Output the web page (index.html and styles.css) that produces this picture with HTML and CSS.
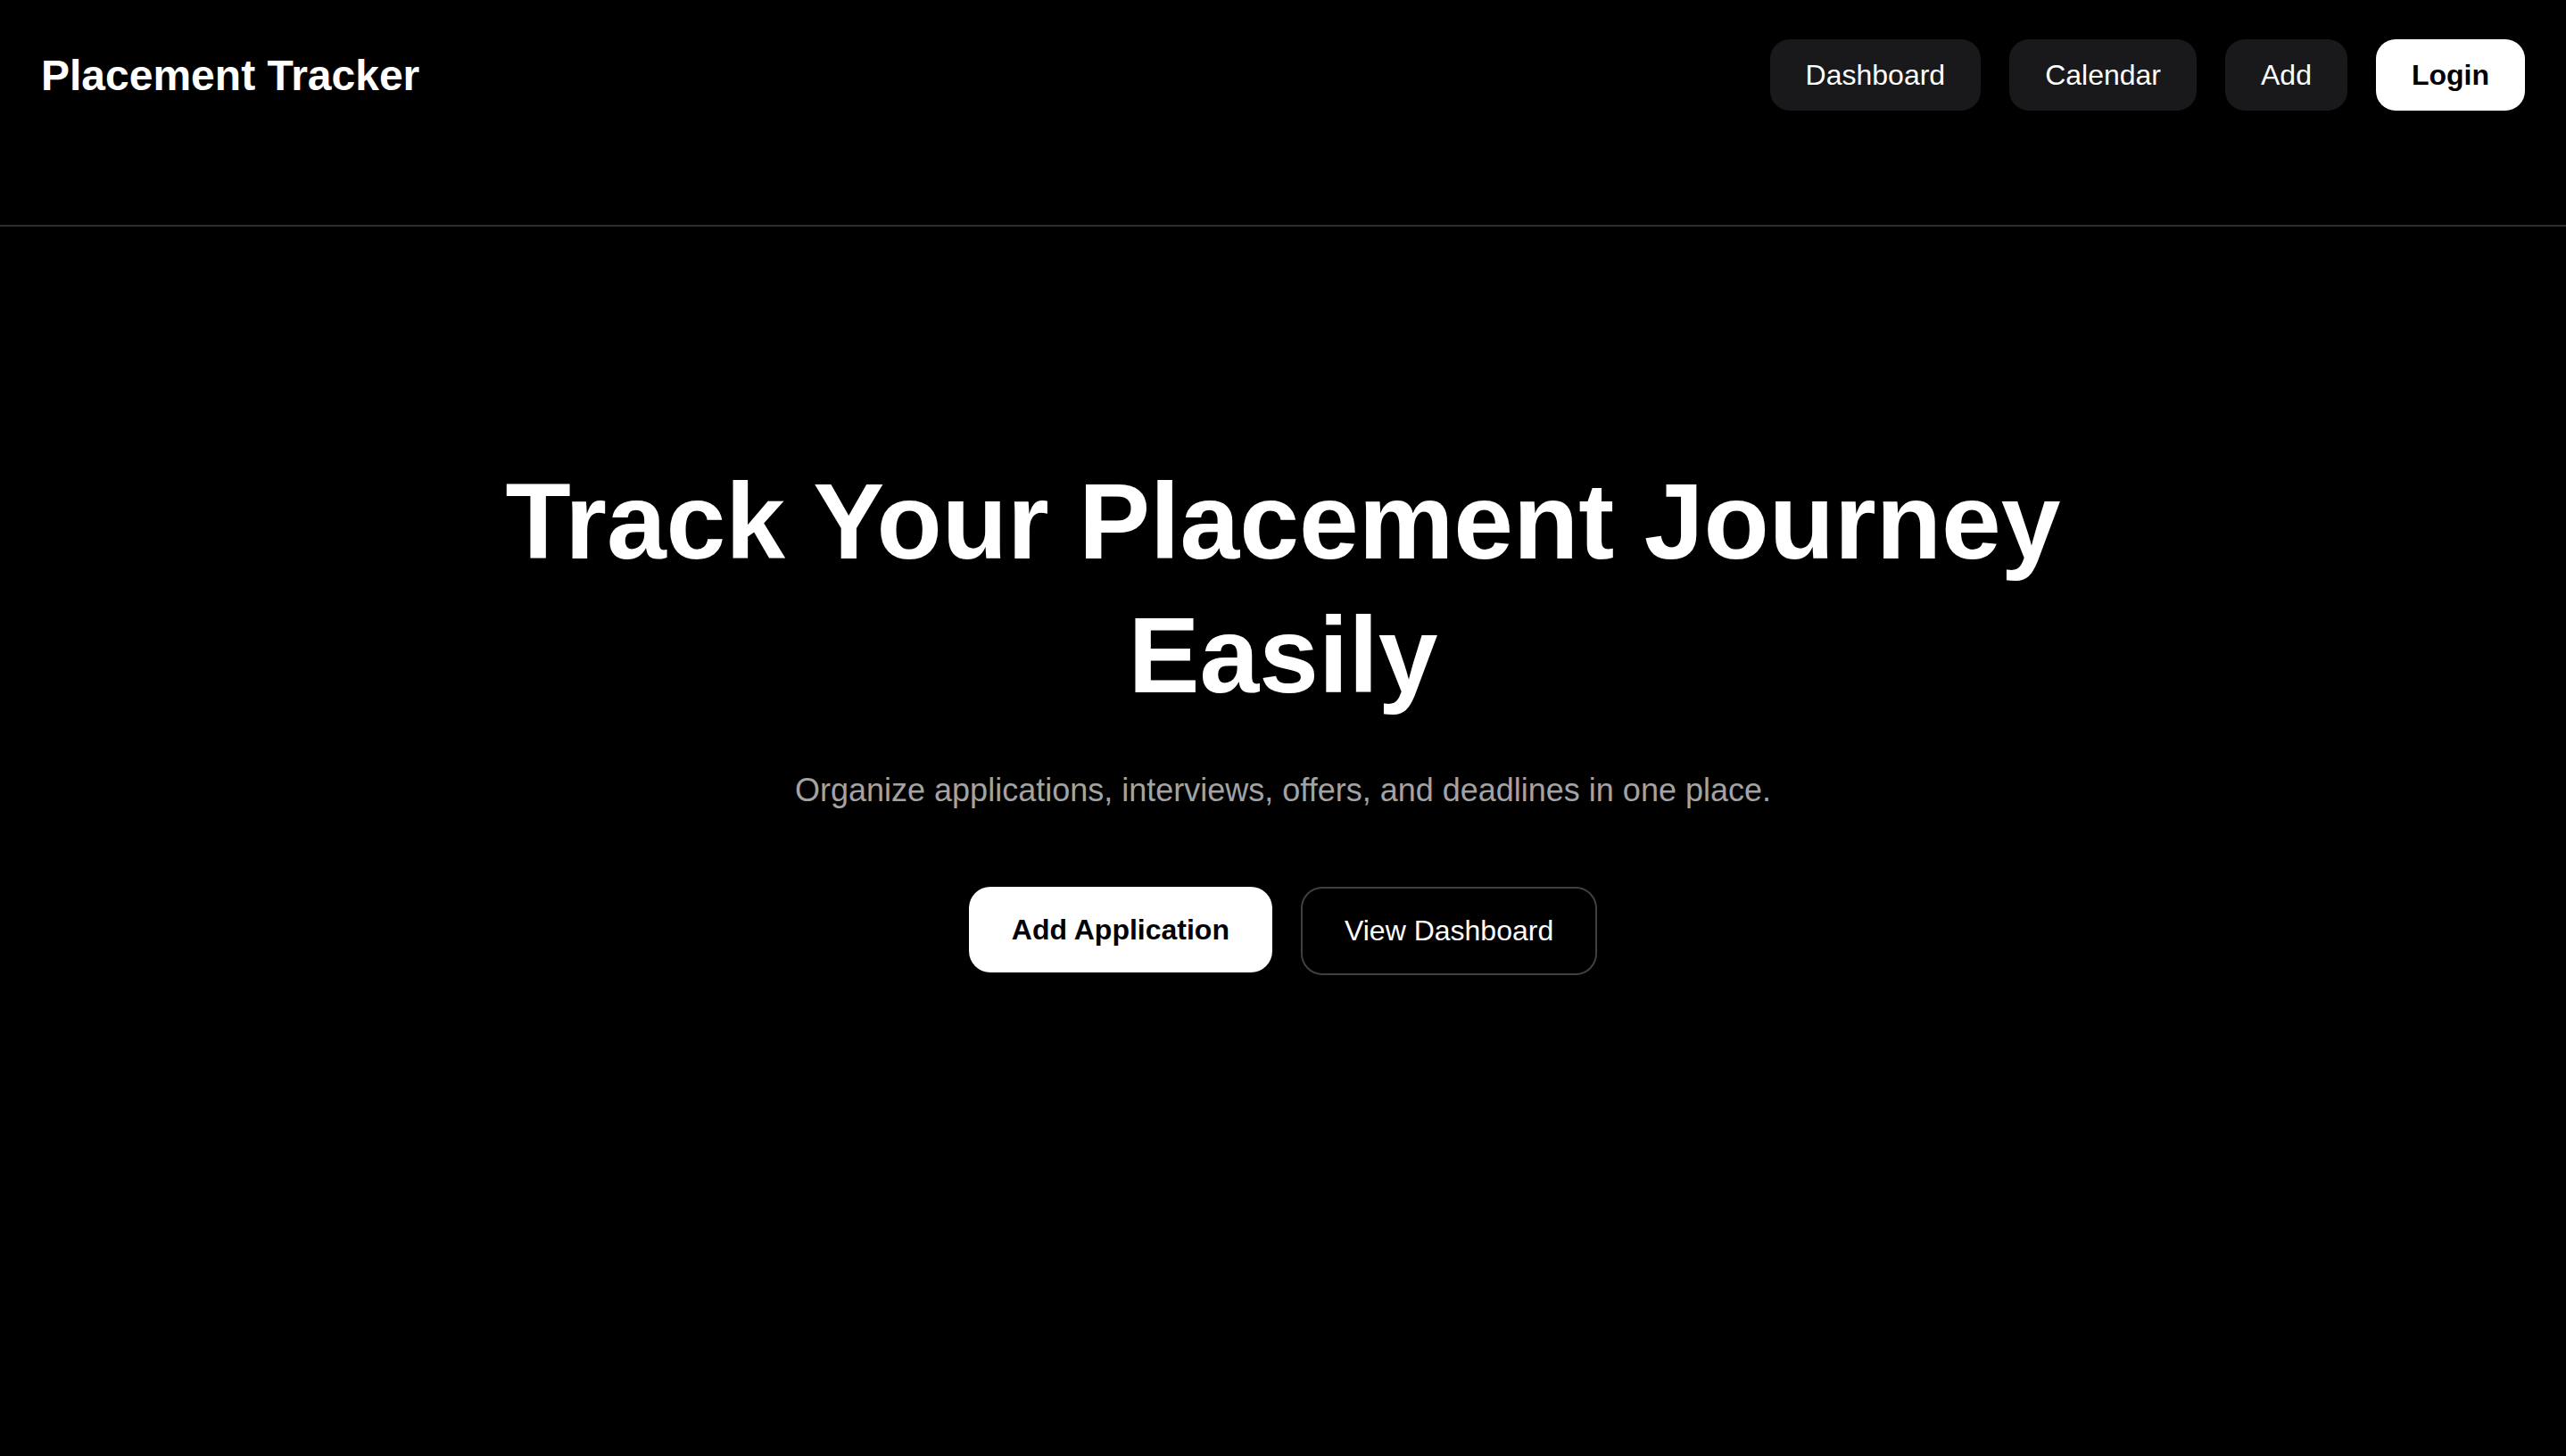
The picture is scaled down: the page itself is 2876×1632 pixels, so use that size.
FILE: index.html
```html
<!DOCTYPE html>
<html lang="en">
<head>
<meta charset="utf-8">
<title>Placement Tracker</title>
<link rel="stylesheet" href="styles.css">
</head>
<body>
<header class="topbar">
  <div class="brand">Placement Tracker</div>
  <nav class="nav">
    <a class="nav-btn" href="#">Dashboard</a>
    <a class="nav-btn" href="#">Calendar</a>
    <a class="nav-btn" href="#">Add</a>
    <a class="nav-btn nav-login" href="#">Login</a>
  </nav>
</header>
<main class="hero">
  <h1 class="hero-title">Track Your Placement Journey Easily</h1>
  <p class="hero-sub">Organize applications, interviews, offers, and deadlines in one place.</p>
  <div class="hero-actions">
    <a class="btn btn-primary" href="#">Add Application</a>
    <a class="btn btn-outline" href="#">View Dashboard</a>
  </div>
</main>
</body>
</html>
```

FILE: styles.css
```css
* { box-sizing: border-box; }
html, body {
  margin: 0;
  padding: 0;
  background: #000;
  color: #fff;
  font-family: "Liberation Sans", Arial, sans-serif;
}
a { text-decoration: none; }

.topbar {
  display: flex;
  justify-content: space-between;
  align-items: center;
  padding: 44px 46px 128px;
  border-bottom: 2px solid #2e2e32;
}
.brand {
  font-size: 48px;
  font-weight: 700;
  color: #fff;
}
.nav {
  display: flex;
  gap: 32px;
}
.nav-btn {
  display: block;
  height: 80px;
  line-height: 80px;
  padding: 0 40px;
  border-radius: 22px;
  background: #19191c;
  color: #fff;
  font-size: 32px;
}
.nav-login {
  background: #fff;
  color: #000;
  font-weight: 700;
}

.hero {
  padding-top: 255px;
  text-align: center;
}
.hero-title {
  max-width: 1800px;
  margin: 0 auto;
  font-size: 120px;
  line-height: 1.25;
  font-weight: 700;
}
.hero-sub {
  margin: 50px 0 0;
  font-size: 36px;
  line-height: 1.5;
  color: #a3a3a3;
}
.hero-actions {
  margin-top: 81px;
  display: flex;
  justify-content: center;
  align-items: flex-start;
  gap: 32px;
}
.btn {
  display: block;
  font-size: 32px;
  border-radius: 24px;
}
.btn-primary {
  height: 96px;
  line-height: 96px;
  padding: 0 48px;
  background: #fff;
  color: #000;
  font-weight: 700;
}
.btn-outline {
  height: 99px;
  line-height: 95px;
  padding: 0 47px;
  border: 2px solid #3f3f46;
  color: #fff;
}
```
